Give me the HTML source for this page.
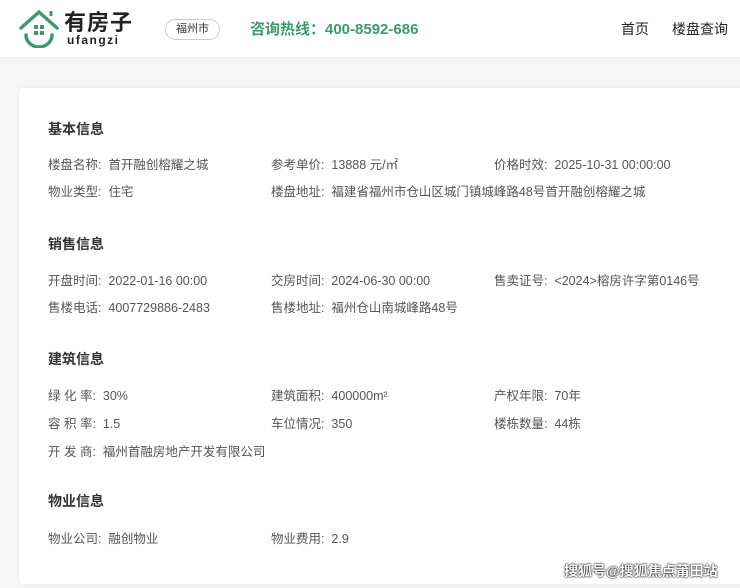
<!DOCTYPE html>
<html><head><meta charset="utf-8"><style>
*{margin:0;padding:0;box-sizing:border-box}
body{width:740px;height:588px;overflow:hidden;background:#f6f6f6;font-family:"Liberation Sans","Noto Sans CJK SC",sans-serif;position:relative}
.hd{position:absolute;left:0;top:0;width:740px;height:58px;background:#fff;border-bottom:1px solid #eee}
.card{position:absolute;left:19px;top:88px;width:740px;height:496px;background:#fff;border-radius:4px;box-shadow:0 0 4px rgba(0,0,0,.08)}
.t{position:absolute;white-space:nowrap;line-height:1.2}
.h{font-size:14px;font-weight:bold;color:#333}
.r{font-size:12.5px;color:#555}
</style></head><body>
<div class="hd">
<svg class="t" style="left:18px;top:8px" width="42" height="40" viewBox="0 0 42 40">
<path d="M3 20 L21 4 L39 20" fill="none" stroke="#3d9b6a" stroke-width="3.5" stroke-linecap="round" stroke-linejoin="round"/>
<path d="M33 8 V3" stroke="#3d9b6a" stroke-width="3"/>
<path d="M8 27 A13 12 0 0 0 34 27" fill="none" stroke="#3d9b6a" stroke-width="3.5" stroke-linecap="round"/>
<rect x="16" y="17" width="4" height="4" fill="#3d9b6a"/><rect x="22" y="17" width="4" height="4" fill="#3d9b6a"/>
<rect x="16" y="23" width="4" height="4" fill="#3d9b6a"/><rect x="22" y="23" width="4" height="4" fill="#3d9b6a"/>
</svg>
<div class="t" style="left:64px;top:12px;font-size:22px;line-height:1;font-weight:bold;color:#222;letter-spacing:1px">有房子</div>
<div class="t" style="left:67px;top:34px;font-size:12px;line-height:1;font-weight:bold;color:#222;letter-spacing:1.5px">ufangzi</div>
<div class="t" style="left:165px;top:19px;width:55px;height:21px;border:1px solid #ccc;border-radius:11px;font-size:11px;color:#333;text-align:center;line-height:19px">福州市</div>
<div class="t" style="left:250px;top:21px;font-size:15px;font-weight:bold;color:#3d9b6a">咨询热线：400-8592-686</div>
<div class="t" style="left:621px;top:21px;font-size:14px;color:#222">首页</div>
<div class="t" style="left:672px;top:21px;font-size:14px;color:#222">楼盘查询</div>
</div>
<div class="card"></div>
<div class="t h" style="left:48px;top:121px">基本信息</div>
<div class="t r" style="left:48px;top:158px">楼盘名称:&nbsp; 首开融创榕耀之城</div>
<div class="t r" style="left:271px;top:158px">参考单价:&nbsp; 13888 元/㎡</div>
<div class="t r" style="left:494px;top:158px">价格时效:&nbsp; 2025-10-31 00:00:00</div>
<div class="t r" style="left:48px;top:185px">物业类型:&nbsp; 住宅</div>
<div class="t r" style="left:271px;top:185px">楼盘地址:&nbsp; 福建省福州市仓山区城门镇城峰路48号首开融创榕耀之城</div>
<div class="t h" style="left:48px;top:236px">销售信息</div>
<div class="t r" style="left:48px;top:274px">开盘时间:&nbsp; 2022-01-16 00:00</div>
<div class="t r" style="left:271px;top:274px">交房时间:&nbsp; 2024-06-30 00:00</div>
<div class="t r" style="left:494px;top:274px">售卖证号:&nbsp; &lt;2024&gt;榕房许字第0146号</div>
<div class="t r" style="left:48px;top:301px">售楼电话:&nbsp; 4007729886-2483</div>
<div class="t r" style="left:271px;top:301px">售楼地址:&nbsp; 福州仓山南城峰路48号</div>
<div class="t h" style="left:48px;top:351px">建筑信息</div>
<div class="t r" style="left:48px;top:389px">绿 化 率:&nbsp; 30%</div>
<div class="t r" style="left:271px;top:389px">建筑面积:&nbsp; 400000m²</div>
<div class="t r" style="left:494px;top:389px">产权年限:&nbsp; 70年</div>
<div class="t r" style="left:48px;top:417px">容 积 率:&nbsp; 1.5</div>
<div class="t r" style="left:271px;top:417px">车位情况:&nbsp; 350</div>
<div class="t r" style="left:494px;top:417px">楼栋数量:&nbsp; 44栋</div>
<div class="t r" style="left:48px;top:445px">开 发 商:&nbsp; 福州首融房地产开发有限公司</div>
<div class="t h" style="left:48px;top:493px">物业信息</div>
<div class="t r" style="left:48px;top:532px">物业公司:&nbsp; 融创物业</div>
<div class="t r" style="left:271px;top:532px">物业费用:&nbsp; 2.9</div>
<div class="t" style="left:564px;top:563px;font-size:14px;font-weight:bold;color:#fff;text-shadow:0 0 2px #000,0 0 1px #000">搜狐号@搜狐焦点莆田站</div>
</body></html>
